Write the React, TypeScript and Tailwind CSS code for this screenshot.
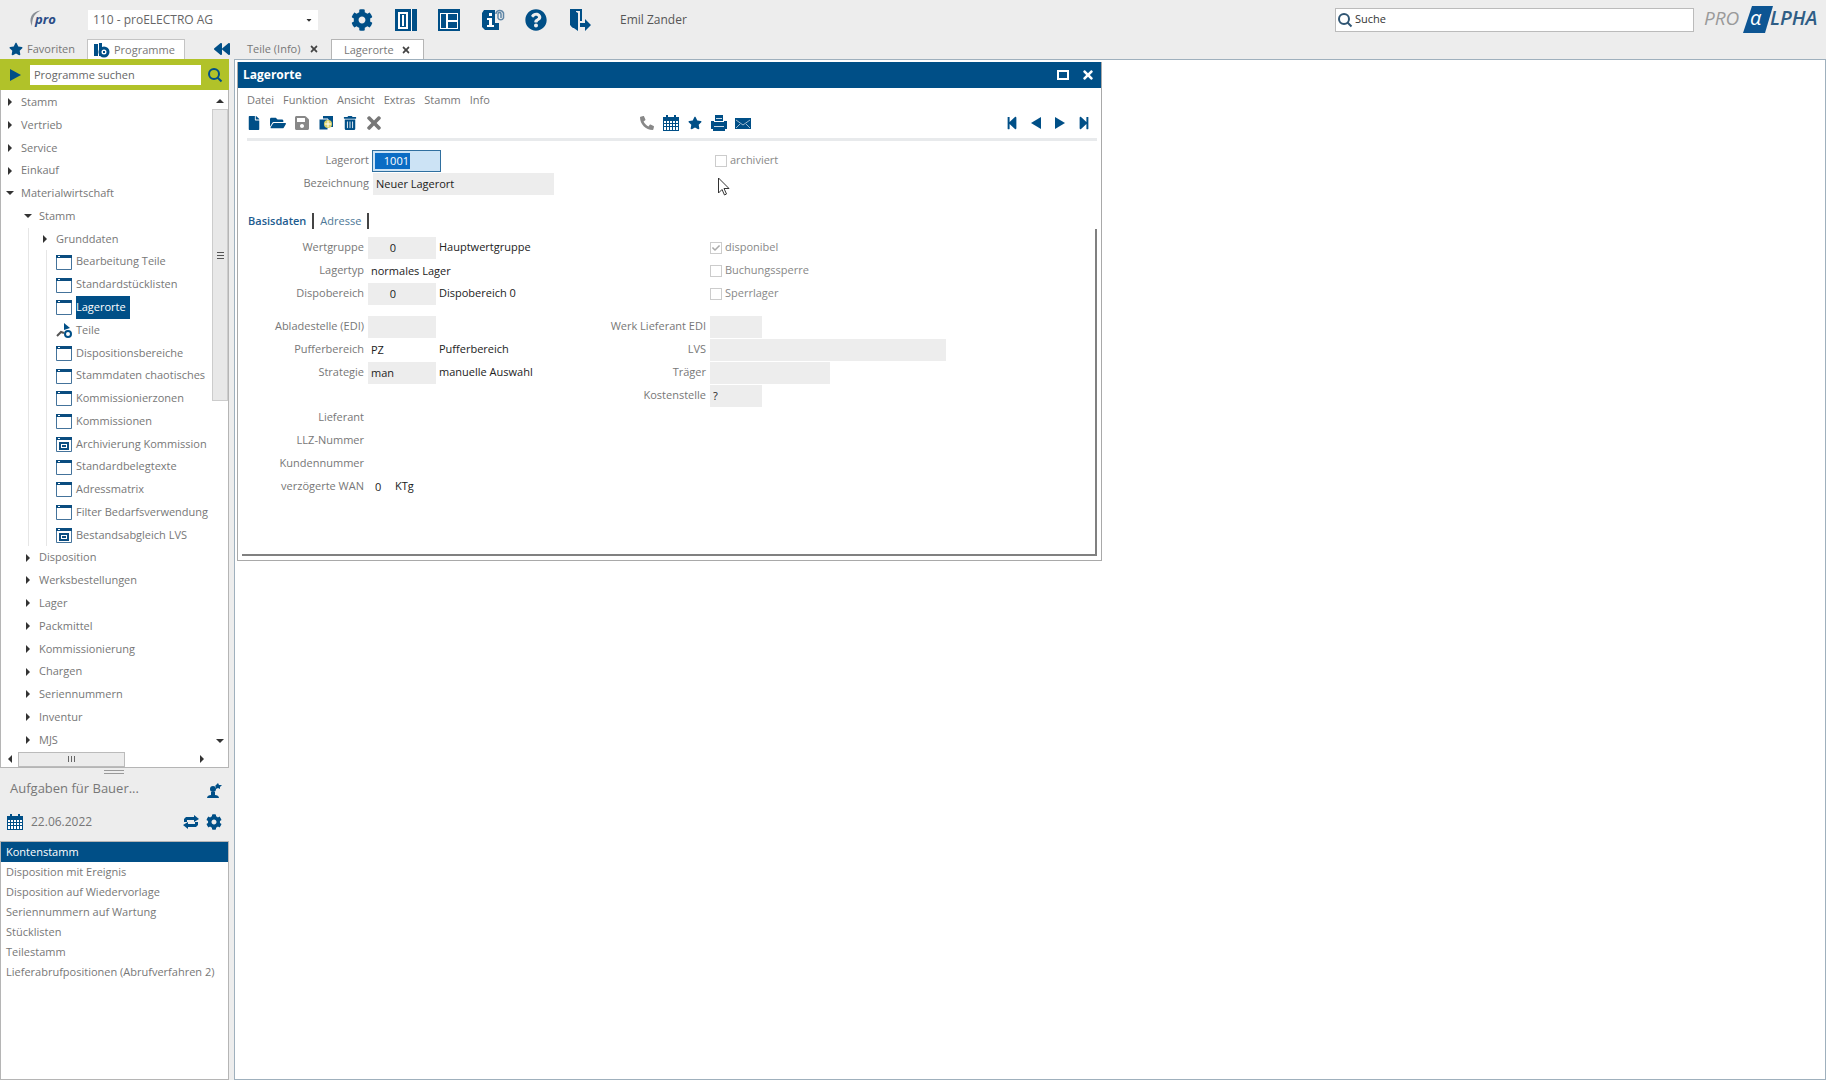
import { useState } from 'react';
import type { ReactNode } from 'react';
import {
  FaBackward,
  FaCaretDown,
  FaCheck,
  FaCog,
  FaFile,
  FaFolderOpen,
  FaPhone,
  FaQuestionCircle,
  FaSave,
  FaStar,
  FaStepBackward,
  FaStepForward,
  FaTimes,
  FaTrashAlt,
} from 'react-icons/fa';

type Kind = 'closed' | 'open' | 'form' | 'report' | 'info';
type Node = { label: string; level: number; kind: Kind };

const tree: Node[] = [
  { label: 'Stamm', level: 0, kind: 'closed' },
  { label: 'Vertrieb', level: 0, kind: 'closed' },
  { label: 'Service', level: 0, kind: 'closed' },
  { label: 'Einkauf', level: 0, kind: 'closed' },
  { label: 'Materialwirtschaft', level: 0, kind: 'open' },
  { label: 'Stamm', level: 1, kind: 'open' },
  { label: 'Grunddaten', level: 2, kind: 'closed' },
  { label: 'Bearbeitung Teile', level: 2, kind: 'form' },
  { label: 'Standardstücklisten', level: 2, kind: 'form' },
  { label: 'Lagerorte', level: 2, kind: 'form' },
  { label: 'Teile', level: 2, kind: 'info' },
  { label: 'Dispositionsbereiche', level: 2, kind: 'form' },
  { label: 'Stammdaten chaotisches', level: 2, kind: 'form' },
  { label: 'Kommissionierzonen', level: 2, kind: 'form' },
  { label: 'Kommissionen', level: 2, kind: 'form' },
  { label: 'Archivierung Kommission', level: 2, kind: 'report' },
  { label: 'Standardbelegtexte', level: 2, kind: 'form' },
  { label: 'Adressmatrix', level: 2, kind: 'form' },
  { label: 'Filter Bedarfsverwendung', level: 2, kind: 'form' },
  { label: 'Bestandsabgleich LVS', level: 2, kind: 'report' },
  { label: 'Disposition', level: 1, kind: 'closed' },
  { label: 'Werksbestellungen', level: 1, kind: 'closed' },
  { label: 'Lager', level: 1, kind: 'closed' },
  { label: 'Packmittel', level: 1, kind: 'closed' },
  { label: 'Kommissionierung', level: 1, kind: 'closed' },
  { label: 'Chargen', level: 1, kind: 'closed' },
  { label: 'Seriennummern', level: 1, kind: 'closed' },
  { label: 'Inventur', level: 1, kind: 'closed' },
  { label: 'MJS', level: 1, kind: 'closed' },
];

const tasks = [
  'Kontenstamm',
  'Disposition mit Ereignis',
  'Disposition auf Wiedervorlage',
  'Seriennummern auf Wartung',
  'Stücklisten',
  'Teilestamm',
  'Lieferabrufpositionen (Abrufverfahren 2)',
];

function Arrow({ dir, className = '' }: { dir: 'up' | 'down' | 'left' | 'right'; className?: string }) {
  const d = {
    up: 'M0 6 L4 2 L8 6Z',
    down: 'M0 2 L8 2 L4 6Z',
    left: 'M6 0 L2 4 L6 8Z',
    right: 'M2 0 L6 4 L2 8Z',
  }[dir];
  return (
    <svg viewBox="0 0 8 8" className={`size-2 shrink-0 ${className}`} fill="currentColor">
      <path d={d} />
    </svg>
  );
}

function CalendarIcon() {
  return (
    <svg viewBox="0 0 16 16" className="size-4">
      <path d="M0 2h16v14H0z M3 0h2v3H3z M11 0h2v3h-2z" fill="currentColor" />
      <path
        d="M1 6h2v2H1z M4 6h2v2H4z M7 6h2v2H7z M10 6h2v2h-2z M13 6h2v2h-2z M1 9h2v2H1z M4 9h2v2H4z M7 9h2v2H7z M10 9h2v2h-2z M13 9h2v2h-2z M1 12h2v3H1z M4 12h2v3H4z M7 12h2v3H7z M10 12h2v3h-2z M13 12h2v3h-2z"
        fill="#fff"
      />
    </svg>
  );
}

function ColumnsIcon() {
  return (
    <svg viewBox="0 0 24 24" className="size-6">
      <path d="M1 1h22v22H1z" fill="#004f87" />
      <path d="M4 4h10v17H4z M6 6v13h6V6z" fill="#fff" fillRule="evenodd" />
      <path d="M8 7h2v11H8z M17 1h1v22h-1z" fill="#fff" />
    </svg>
  );
}

function LayoutIcon() {
  return (
    <svg viewBox="0 0 24 24" className="size-6">
      <path d="M1 1h22v22H1z" fill="#004f87" />
      <path d="M3 5h18v1H3z M3 5h1v16H3z M20 5h1v16h-1z M3 20h18v1H3z M9 5h2v16H9z M11 12h10v2H11z" fill="#fff" />
    </svg>
  );
}

function InfoBookIcon() {
  return (
    <svg viewBox="0 0 24 24" className="size-6">
      <path d="M1 5l2-3h15v20H4l-3-3z" fill="#004f87" />
      <path d="M8 5h3v3H8z M6 10h5v7h2v2H6v-2h2v-5H6z" fill="#fff" />
      <path d="M14 0h10v15H14z" fill="#ededed" />
      <path
        d="M15 6V5a4 4 0 0 1 7.500 0v5a3 3 0 0 1-5.500 0V6a1.500 1.500 0 0 1 3 0v4"
        fill="none"
        stroke="#5f86a6"
        strokeWidth="1.500"
      />
    </svg>
  );
}

function ExitIcon() {
  return (
    <svg viewBox="0 0 24 24" className="size-6">
      <path d="M2 1h12v12h-2V3H8v17H5l-3-3z" fill="#004f87" />
      <path d="M3 1l7 4v18l-7-5z M12 15h5v-4l6 6-6 6v-4h-5z" fill="#004f87" />
    </svg>
  );
}

function CopyIcon() {
  return (
    <svg viewBox="0 0 16 16" className="size-4">
      <path d="M5 1h10v11H5z" fill="#004f87" />
      <path d="M1 4h9v11H1z" fill="#004f87" stroke="#fff" />
      <circle cx="10" cy="9" r="4" fill="#d9d36a" />
      <path d="M10 6v6M7 9h6" stroke="#fff" />
    </svg>
  );
}

function PrinterIcon() {
  return (
    <svg viewBox="0 0 16 16" className="size-4">
      <path d="M4 0h8v6H4z M0 6h3v2h10V6h3v8H0z M2 13h12v3H2z" fill="#004f87" />
      <path d="M5 3h6v1H5z M3 11h10v1H3z" fill="#c9d9e6" />
      <path d="M3 7h10v2H3z" fill="#004f87" />
    </svg>
  );
}

function MailIcon() {
  return (
    <svg viewBox="0 0 16 16" className="size-4">
      <path d="M0 3h16v11H0z" fill="#004f87" />
      <path d="M1 5l7 5 7-5 M1 13l4-4 M15 13l-4-4" fill="none" stroke="#9dbad1" />
    </svg>
  );
}

function RefreshIcon() {
  return (
    <svg viewBox="0 0 16 16" className="size-4" fill="currentColor">
      <path d="M1 8V5l2-2h8V1l5 4-5 3V6H4v2z M15 8v3l-2 2H5v2l-5-4 5-3v2h7V8z" />
    </svg>
  );
}

function SearchIcon() {
  return (
    <svg viewBox="0 0 16 16" className="size-4 shrink-0" fill="none" stroke="currentColor" strokeWidth="2">
      <circle cx="7" cy="7" r="5" />
      <path d="M10.500 10.500l4 4" />
    </svg>
  );
}

function TreeIcon({ kind }: { kind: Kind }) {
  if (kind === 'closed') return <Arrow dir="right" className="mr-[7px] text-[#333]" />;
  if (kind === 'open') return <Arrow dir="down" className="mr-[7px] text-[#333]" />;
  if (kind === 'info') {
    return (
      <svg viewBox="0 0 16 16" className="mr-1 ml-[15px] size-4 shrink-0">
        <path d="M1 14l4-4 3 1" fill="none" stroke="#555" strokeWidth="2" />
        <path d="M8 1l6 5-6 2z" fill="#004f87" />
        <circle cx="12" cy="12" r="3" fill="#fff" stroke="#004f87" strokeWidth="2" />
      </svg>
    );
  }
  return (
    <svg viewBox="0 0 16 16" className="mr-1 ml-[15px] size-4 shrink-0">
      <path d="M.5 1.500h15v14H.5z" fill="#fff" stroke="#44739b" />
      <path d="M0 1h16v3H0z" fill="#0b4d80" />
      <path d="M2 2h2v1H2z" fill="#fff" />
      {kind === 'report' && (
        <path d="M3 6h10v8H3z M5 8v4h6V8z M6 9h4v2H6z" fill="#0b4d80" fillRule="evenodd" />
      )}
    </svg>
  );
}

function IconButton({ label, children }: { label: string; children: ReactNode }) {
  return (
    <button aria-label={label} className="flex size-4 items-center justify-center text-[#004f87]">
      {children}
    </button>
  );
}

function TopBar() {
  return (
    <header className="flex h-[39px] shrink-0 items-center">
      <svg viewBox="0 0 30 24" className="ml-7 h-6 w-[30px] overflow-visible" fontFamily="Open Sans, sans-serif">
        <path d="M4 18C0 11 4 3 13 2.500C7 5 4 9 4 18Z" fill="#8a8f96" />
        <text x="7" y="16" fontSize="13" fontWeight="700" fontStyle="italic" fill="#2a4c86">
          pro
        </text>
      </svg>
      <div className="relative ml-[30px] w-[230px]">
        <select
          aria-label="Mandant"
          className="block h-5 w-full appearance-none bg-white pl-[5px] text-xs leading-5 text-[#666]"
        >
          <option>110 - proELECTRO AG</option>
        </select>
        <FaCaretDown className="pointer-events-none absolute top-[6px] right-[5px] size-2 text-[#333]" />
      </div>
      <nav className="ml-8 flex w-[242px] justify-between text-[#004f87]">
        <button aria-label="Einstellungen"><FaCog className="size-6 p-px" /></button>
        <button aria-label="Spalten"><ColumnsIcon /></button>
        <button aria-label="Layout"><LayoutIcon /></button>
        <button aria-label="Handbuch"><InfoBookIcon /></button>
        <button aria-label="Hilfe"><FaQuestionCircle className="size-6 p-px" /></button>
        <button aria-label="Abmelden"><ExitIcon /></button>
      </nav>
      <span className="ml-7 text-xs leading-6 text-[#555]">Emil Zander</span>
      <div className="ml-auto flex h-6 w-[359px] items-center border border-[#bbb] bg-white pl-px text-[#2f5573]">
        <SearchIcon />
        <input
          aria-label="Suche"
          defaultValue="Suche"
          className="w-full px-[2px] text-[11px] text-[#333] outline-none"
        />
      </div>
      <svg
        viewBox="0 0 120 30"
        className="mr-[3px] ml-[9px] h-[30px] w-[120px] overflow-visible"
        fontFamily="Open Sans, sans-serif"
        fontStyle="italic"
      >
        <text x="1" y="20" fontSize="19" fill="#9a9a9a">PRO</text>
        <path d="M49 1h21l-8 27H40z" fill="#0d5593" />
        <text x="47" y="20" fontSize="20" fill="#fff">α</text>
        <text x="67" y="20" fontSize="20" fontWeight="600" fill="#2f5d85">LPHA</text>
      </svg>
    </header>
  );
}

function TabRow() {
  return (
    <div className="flex h-5 shrink-0 text-[11px] leading-5 text-[#777]">
      <button className="flex w-[87px] items-center gap-1 pl-[9px]">
        <FaStar className="size-[14px] text-[#004f87]" />
        Favoriten
      </button>
      <button className="flex w-[98px] items-center gap-1 border border-b-0 border-[#c4c4c4] bg-white pl-[6px]">
        <svg viewBox="0 0 16 16" className="size-4">
          <path d="M0 2h4v12H0z M5 1h3v13H5z" fill="#004f87" />
          <circle cx="10" cy="10" r="4" fill="#fff" stroke="#004f87" strokeWidth="3" />
          <path d="M9 9h2v2H9z" fill="#004f87" />
        </svg>
        Programme
      </button>
      <button aria-label="Einklappen" className="flex w-[50px] items-center pl-[29px]">
        <FaBackward className="size-4 text-[#004f87]" />
      </button>
      <div className="flex w-24 items-center justify-between pr-3 pl-3">
        Teile (Info)
        <button aria-label="Teile schließen"><FaTimes className="size-[10px] text-[#444]" /></button>
      </div>
      <div className="flex w-[93px] items-center justify-between border border-b-0 border-[#b5b5b5] bg-white pr-3 pl-3">
        Lagerorte
        <button aria-label="Lagerorte schließen"><FaTimes className="size-[10px] text-[#444]" /></button>
      </div>
    </div>
  );
}

const indent = ['pl-[5px]', 'pl-[23px]', 'pl-10'];

function ProgramTree({ selected, onSelect }: { selected: string; onSelect: (label: string) => void }) {
  return (
    <div className="flex h-[678px] shrink-0 flex-col border border-t-0 border-[#b5b5b5] bg-white">
      <div className="flex min-h-0 flex-1">
        <ul className="flex min-w-0 flex-1 flex-col overflow-hidden pt-px text-[11px] text-[#777]">
          {tree.map((node, i) => (
            <li key={i} className={`relative flex min-h-0 flex-1 items-center whitespace-nowrap ${indent[node.level]}`}>
              {i > 5 && i < 20 && <span className="absolute inset-y-0 left-[27px] w-px bg-[#e6e6e6]" />}
              {i > 6 && i < 20 && <span className="absolute inset-y-0 left-[45px] w-px bg-[#e6e6e6]" />}
              <button className="flex h-full items-center" onClick={() => onSelect(node.label)}>
                <TreeIcon kind={node.kind} />
                <span
                  className={
                    node.label === selected
                      ? 'flex h-full items-center bg-[#004f87] pr-1 text-white'
                      : ''
                  }
                >
                  {node.label}
                </span>
              </button>
            </li>
          ))}
        </ul>
        <div className="flex w-4 flex-col items-center text-[#333]">
          <Arrow dir="up" className="mt-[7px] mb-1" />
          <div className="flex h-[292px] w-4 flex-col items-center justify-center gap-[2px] border border-[#ccc] bg-[#e8e8e8]">
            <span className="h-px w-[7px] bg-[#555]" />
            <span className="h-px w-[7px] bg-[#555]" />
            <span className="h-px w-[7px] bg-[#555]" />
          </div>
          <Arrow dir="down" className="mt-auto mb-[6px]" />
        </div>
      </div>
      <div className="flex h-4 items-center text-[#333]">
        <Arrow dir="left" className="ml-[5px]" />
        <div className="ml-1 flex h-[15px] w-[107px] items-center justify-center gap-[2px] border border-[#bbb] bg-[#ececec]">
          <span className="h-[6px] w-px bg-[#666]" />
          <span className="h-[6px] w-px bg-[#666]" />
          <span className="h-[6px] w-px bg-[#666]" />
        </div>
        <Arrow dir="right" className="ml-[73px]" />
      </div>
    </div>
  );
}

function Tasks() {
  const [active, setActive] = useState(0);
  return (
    <section className="flex min-h-0 flex-1 flex-col">
      <div className="mt-[2px] ml-[104px] h-1 w-5 border-y border-[#999]" />
      <div className="flex h-[30px] items-center justify-between pr-[7px] pl-[10px]">
        <h2 className="text-[13px] text-[#777]">Aufgaben für Bauer...</h2>
        <IconButton label="Benutzer wechseln">
          <svg viewBox="0 0 16 16" className="mt-1 size-4" fill="currentColor">
            <circle cx="7" cy="6" r="3" />
            <path d="M1 15c0-2 2-3 4-3V9h4v3c2 0 4 1 4 3z M12 0l1 2h3l-2 2v2l-2-1-2 1V4L9 3z" />
          </svg>
        </IconButton>
      </div>
      <div className="flex h-9 items-center px-[7px] text-[#004f87]">
        <CalendarIcon />
        <span className="ml-2 text-xs text-[#777]">22.06.2022</span>
        <button aria-label="Aktualisieren" className="ml-auto"><RefreshIcon /></button>
        <button aria-label="Einstellungen" className="ml-[7px]"><FaCog className="size-4" /></button>
      </div>
      <ul className="mt-px flex-1 border border-[#b5b5b5] bg-white text-[11px] text-[#777]">
        {tasks.map((task, i) => (
          <li key={task}>
            <button
              onClick={() => setActive(i)}
              className={`block h-5 w-full pl-[5px] text-left leading-5 whitespace-nowrap ${
                i === active ? 'bg-[#004f87] text-white' : ''
              }`}
            >
              {task}
            </button>
          </li>
        ))}
      </ul>
    </section>
  );
}

type FieldProps = {
  id: string;
  label: string;
  value?: string;
  text?: string;
  plain?: boolean;
  labelWidth?: string;
  width?: string;
  align?: string;
};

function Field({
  id,
  label,
  value = '',
  text,
  plain,
  labelWidth = 'w-[122px]',
  width = 'w-[68px]',
  align = 'pl-[3px]',
}: FieldProps) {
  return (
    <div className="flex h-[23px] items-center">
      <label htmlFor={id} className={`${labelWidth} shrink-0 text-right text-[#777]`}>{label}</label>
      <input
        id={id}
        readOnly
        defaultValue={value}
        className={`ml-1 h-[22px] ${width} ${align} text-[#222] outline-none ${plain ? 'bg-transparent' : 'bg-[#ededed]'}`}
      />
      {text && <span className="ml-[3px] text-[#222]">{text}</span>}
    </div>
  );
}

function Check({ label, checked }: { label: string; checked?: boolean }) {
  return (
    <label className="flex h-[23px] items-center gap-[3px] text-[#888]">
      <span className="relative size-3">
        <input
          type="checkbox"
          disabled
          defaultChecked={checked}
          className="block size-3 appearance-none border border-[#ccc] bg-white"
        />
        {checked && <FaCheck className="absolute top-[2px] left-[2px] size-2 text-[#aaa]" />}
      </span>
      {label}
    </label>
  );
}

function Toolbar() {
  return (
    <div className="flex h-[30px] items-center pr-[9px] pl-2">
      <div className="flex w-[393px] gap-2">
        <IconButton label="Neu"><FaFile className="size-[14px]" /></IconButton>
        <IconButton label="Öffnen"><FaFolderOpen className="size-4" /></IconButton>
        <IconButton label="Speichern"><FaSave className="size-4 text-[#888]" /></IconButton>
        <IconButton label="Kopieren"><CopyIcon /></IconButton>
        <IconButton label="Löschen"><FaTrashAlt className="size-[14px]" /></IconButton>
        <IconButton label="Abbrechen"><FaTimes className="size-5 shrink-0 text-[#777]" /></IconButton>
      </div>
      <div className="flex flex-1 gap-2">
        <IconButton label="Telefon"><FaPhone className="size-[14px] -scale-x-100 text-[#888]" /></IconButton>
        <IconButton label="Kalender"><CalendarIcon /></IconButton>
        <IconButton label="Favorit"><FaStar className="size-[14px]" /></IconButton>
        <IconButton label="Drucken"><PrinterIcon /></IconButton>
        <IconButton label="E-Mail"><MailIcon /></IconButton>
      </div>
      <div className="flex gap-2">
        <IconButton label="Erster"><FaStepBackward className="size-[14px]" /></IconButton>
        <IconButton label="Zurück">
          <svg viewBox="0 0 14 14" className="size-[14px]" fill="currentColor"><path d="M12 1v12L2 7z" /></svg>
        </IconButton>
        <IconButton label="Weiter">
          <svg viewBox="0 0 14 14" className="size-[14px]" fill="currentColor"><path d="M2 1v12l10-6z" /></svg>
        </IconButton>
        <IconButton label="Letzter"><FaStepForward className="size-[14px]" /></IconButton>
      </div>
    </div>
  );
}

function StorageWindow() {
  return (
    <section className="relative w-[865px] border border-t-0 border-[#a9a9a9] bg-white text-[11px]">
      <div className="flex h-[26px] items-center bg-[#004f87] pr-[6px] pl-[5px] text-white">
        <h1 className="flex-1 text-xs font-bold">Lagerorte</h1>
        <button aria-label="Maximieren" className="mr-3 h-[10px] w-3 border-2 border-white" />
        <button aria-label="Schließen"><FaTimes className="size-[14px]" /></button>
      </div>
      <div className="mt-1 flex h-4 gap-[9px] pl-[9px] leading-4 text-[#777]">
        {['Datei', 'Funktion', 'Ansicht', 'Extras', 'Stamm', 'Info'].map((item) => (
          <button key={item}>{item}</button>
        ))}
      </div>
      <Toolbar />
      <div className="mr-1 ml-[9px] h-[3px] bg-[#e8eaec]" />

      <div className="mt-2 flex">
        <div className="w-[477px]">
          <div className="flex h-[23px] items-center">
            <label htmlFor="lagerort" className="w-[131px] text-right text-[#777]">Lagerort</label>
            <input
              id="lagerort"
              defaultValue="1001"
              className="ml-[3px] h-[22px] w-[69px] border border-[#2f6f9f] bg-[#cce3f5] bg-[linear-gradient(#0a6cc4,#0a6cc4)] bg-size-[35px_16px] bg-position-[2px_2px] bg-no-repeat pr-[31px] text-right text-white outline-none"
            />
          </div>
          <Field id="bezeichnung" label="Bezeichnung" value="Neuer Lagerort" labelWidth="w-[131px]" width="w-[181px]" />
        </div>
        <Check label="archiviert" />
      </div>

      <div className="mt-[18px] flex h-4 items-center pl-[10px] leading-4">
        <button className="border-r-2 border-[#444] pr-[6px] font-semibold text-[#1d5c8f]">Basisdaten</button>
        <button className="border-r-2 border-[#444] px-[6px] text-[#4d7797]">Adresse</button>
      </div>

      <div className="mr-1 ml-1 flex h-[327px] border-r-2 border-b-2 border-[#808080] pt-[7px]">
        <div className="w-[357px]">
          <Field id="wertgruppe" label="Wertgruppe" value="0" text="Hauptwertgruppe" align="pr-10 text-right" />
          <Field id="lagertyp" label="Lagertyp" value="normales Lager" plain width="w-[120px]" />
          <Field id="dispobereich" label="Dispobereich" value="0" text="Dispobereich 0" align="pr-10 text-right" />
          <div className="h-[10px]" />
          <Field id="abladestelle" label="Abladestelle (EDI)" />
          <Field id="pufferbereich" label="Pufferbereich" value="PZ" text="Pufferbereich" plain />
          <Field id="strategie" label="Strategie" value="man" text="manuelle Auswahl" />
          <div className="h-[22px]" />
          <Field id="lieferant" label="Lieferant" plain />
          <Field id="llz" label="LLZ-Nummer" plain />
          <Field id="kundennummer" label="Kundennummer" plain />
          <Field id="wan" label="verzögerte WAN" value="0" text="KTg" plain width="w-6" align="pl-[7px]" />
        </div>
        <div>
          <div className="pl-[111px]">
            <Check label="disponibel" checked />
            <Check label="Buchungssperre" />
            <Check label="Sperrlager" />
          </div>
          <div className="h-[10px]" />
          <Field id="werk" label="Werk Lieferant EDI" labelWidth="w-[107px]" width="w-[52px]" />
          <Field id="lvs" label="LVS" labelWidth="w-[107px]" width="w-[236px]" />
          <Field id="traeger" label="Träger" labelWidth="w-[107px]" width="w-[120px]" />
          <Field id="kostenstelle" label="Kostenstelle" value="?" labelWidth="w-[107px]" width="w-[52px]" />
        </div>
      </div>
      <div className="h-1" />

      {/* mouse pointer */}
      <svg viewBox="0 0 12 19" className="absolute top-[115px] left-[480px] h-[19px] w-3">
        <path d="M.5 1v15l3.500-3.500L6.500 18l2-1-2.500-5.500h5z" fill="#fff" stroke="#333" />
      </svg>
    </section>
  );
}

export default function App() {
  const [selected, setSelected] = useState('Lagerorte');
  return (
    <div className="flex h-screen flex-col bg-[#ededed] font-['Open_Sans','Noto_Sans',sans-serif]">
      <TopBar />
      <TabRow />
      <div className="flex min-h-0 flex-1">
        <aside className="flex w-[229px] shrink-0 flex-col">
          <div className="flex h-[31px] shrink-0 items-center bg-[#b1c229] pr-[6px] pl-2 text-[#004f87]">
            <svg viewBox="0 0 14 14" className="size-[14px]" fill="currentColor"><path d="M2 1v12l11-6z" /></svg>
            <input
              aria-label="Programme suchen"
              defaultValue="Programme suchen"
              className="ml-2 h-5 min-w-0 flex-1 bg-white px-1 text-[11px] text-[#666] outline-none"
            />
            <button aria-label="Suchen" className="ml-[6px]"><SearchIcon /></button>
          </div>
          <ProgramTree selected={selected} onSelect={setSelected} />
          <Tasks />
        </aside>
        <main className="ml-[5px] min-w-0 flex-1 border border-[#9fb0bd] bg-white pt-[2px] pl-[2px]">
          <StorageWindow />
        </main>
      </div>
    </div>
  );
}
